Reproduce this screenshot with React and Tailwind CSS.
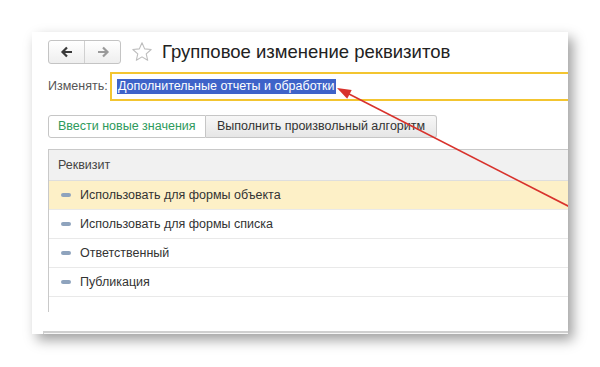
import React from 'react'

const rows = [
  { text: 'Использовать для формы объекта', active: true },
  { text: 'Использовать для формы списка' },
  { text: 'Ответственный' },
  { text: 'Публикация' },
]

function NavArrow({ dir, color }) {
  const d = dir === 'left' ? 'M13 8H4M8 3.5L3.5 8L8 12.5' : 'M3 8H12M8 3.5L12.5 8L8 12.5'
  return (
    <svg width="16" height="16" viewBox="0 0 16 16">
      <path d={d} fill="none" stroke={color} strokeWidth="2.2" strokeLinecap="butt" strokeLinejoin="miter" />
    </svg>
  )
}

export default function App() {
  return (
    <div className="w-[600px] h-[367px] bg-white pt-8 pl-8 font-['Liberation_Sans',Arial,sans-serif]">
      <div className="relative w-[536px] h-[302px] bg-white overflow-hidden shadow-[5px_6px_12px_rgba(0,0,0,0.38)]">
        <div className="pl-4 pt-2">
          {/* header */}
          <div className="flex items-center h-6">
            <div className="flex shrink-0 h-6 w-[73px] rounded-[3px] border border-[#c4c4c4] bg-gradient-to-b from-white to-[#eeeeee]">
              <div className="flex-1 flex items-center justify-center border-r border-[#d0d0d0]">
                <NavArrow dir="left" color="#3a3a3a" />
              </div>
              <div className="flex-1 flex items-center justify-center">
                <NavArrow dir="right" color="#9a9a9a" />
              </div>
            </div>
            <svg className="ml-[10px] shrink-0" width="22" height="22" viewBox="0 0 24 24">
              <polygon
                points="12,2 14.9,8.6 22,9.3 16.6,14 18.2,21 12,17.3 5.8,21 7.4,14 2,9.3 9.1,8.6"
                fill="none"
                stroke="#bdbdbd"
                strokeWidth="1.2"
                strokeLinejoin="round"
              />
            </svg>
            <h1 className="ml-[9px] text-[18.5px] leading-none text-[#222] whitespace-nowrap">
              Групповое изменение реквизитов
            </h1>
          </div>

          {/* field */}
          <div className="flex items-center mt-2 h-[29px]">
            <span className="shrink-0 text-[12.5px] text-[#555] w-[62px] whitespace-nowrap">Изменять:</span>
            <div className="flex shrink-0 items-center h-[29px] w-[600px] border-2 border-[#f3c530] pl-[5px] whitespace-nowrap">
              <span className="bg-[#3e63c9] text-white text-[12.5px] leading-[15px] px-[1px]">
                Дополнительные отчеты и обработки
              </span>
            </div>
          </div>

          {/* tabs */}
          <div className="flex mt-[14px] h-[23px] text-[12.5px] whitespace-nowrap">
            <div className="flex shrink-0 items-center w-[158px] pl-[9px] border border-[#c6c6c6] rounded-l-[3px] bg-white text-[#2e9a5c]">
              Ввести новые значения
            </div>
            <div className="flex shrink-0 items-center w-[231px] pl-[11px] border border-l-0 border-[#c6c6c6] rounded-r-[3px] bg-gradient-to-b from-[#f7f7f7] to-[#e6e6e6] text-[#333]">
              Выполнить произвольный алгоритм
            </div>
          </div>

          {/* table */}
          <div className="mt-[11px] w-[540px] border-l border-t border-[#c9c9c9] text-[12.5px]">
            <div className="flex items-center h-[31px] pl-[9px] bg-[#f1f1f1] border-b border-[#dedede] text-[#444]">
              Реквизит
            </div>
            {rows.map((r) => (
              <div
                key={r.text}
                className={`flex items-center h-[29px] border-b border-[#e9e9e9] ${r.active ? 'bg-[#fdf0c7]' : 'bg-white'}`}
              >
                <span className="ml-[12px] w-[10px] h-[4px] rounded-full bg-[#8ea3bd]" />
                <span className="ml-[9px] text-[#333] whitespace-nowrap">{r.text}</span>
              </div>
            ))}
            <div className="h-[15px]" />
          </div>

          {/* bottom bar */}
          <div className="mt-[19px] -ml-[5px] h-[10px] border-l border-t-2 border-[#cfcfcf] bg-[#f6f6f6]" />
        </div>

        {/* annotation arrow */}
        <svg className="absolute inset-0 pointer-events-none" width="536" height="302" viewBox="0 0 536 302">
          <line x1="317" y1="62" x2="537" y2="174.5" stroke="#d8322c" strokeWidth="1.6" />
          <polygon points="305,56 315.2,66.8 319.7,57.9" fill="#d8322c" />
        </svg>
      </div>
    </div>
  )
}
